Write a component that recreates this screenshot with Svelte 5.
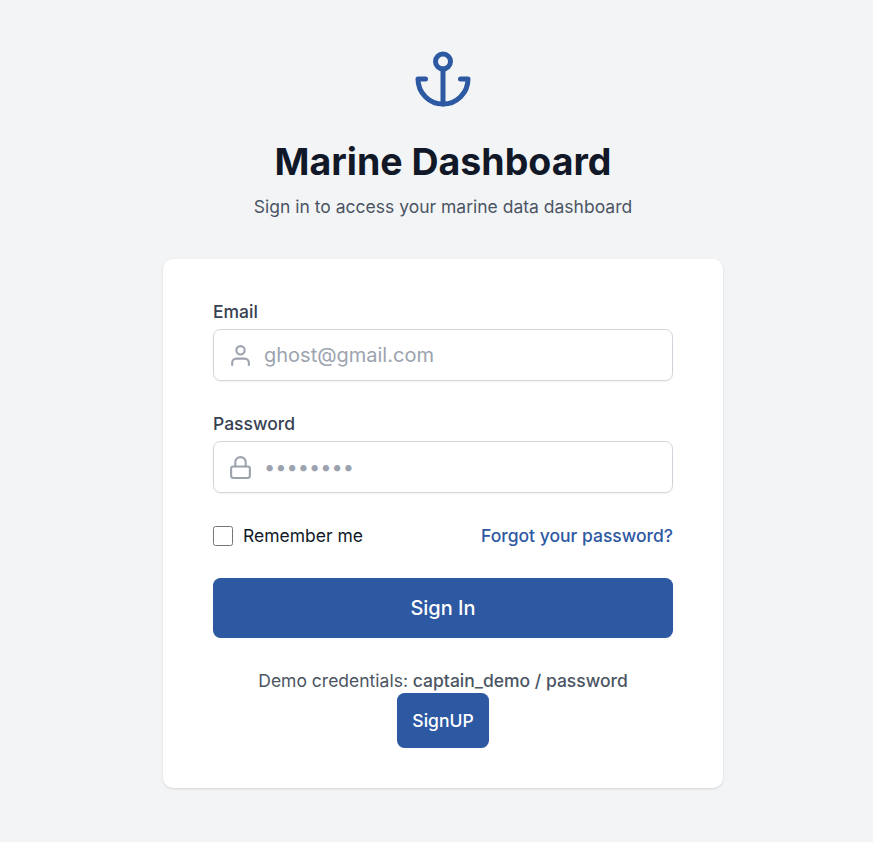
<script>
  let email = $state('');
  let password = $state('');
</script>

<main>
  <header>
    <svg class="anchor" viewBox="0 0 24 24" fill="none" stroke="currentColor" stroke-width="2" stroke-linecap="round" stroke-linejoin="round">
      <path d="M12 22V8" /><path d="M5 12H2a10 10 0 0 0 20 0h-3" /><circle cx="12" cy="5" r="3" />
    </svg>
    <h1>Marine Dashboard</h1>
    <p>Sign in to access your marine data dashboard</p>
  </header>
  <form class="card" onsubmit={(e) => e.preventDefault()}>
    <label class="title" for="email">Email</label>
    <div class="field">
      <svg viewBox="0 0 24 24" fill="none" stroke="currentColor" stroke-width="2" stroke-linecap="round" stroke-linejoin="round"><path d="M20 21v-2a4 4 0 0 0-4-4H8a4 4 0 0 0-4 4v2" /><circle cx="12" cy="7" r="4" /></svg>
      <input id="email" type="email" placeholder="ghost@gmail.com" bind:value={email} />
    </div>
    <label class="title second" for="password">Password</label>
    <div class="field">
      <svg viewBox="0 0 24 24" fill="none" stroke="currentColor" stroke-width="2" stroke-linecap="round" stroke-linejoin="round"><rect x="3" y="11" width="18" height="11" rx="2" /><path d="M7 11V7a5 5 0 0 1 10 0v4" /></svg>
      <input id="password" type="password" placeholder="••••••••" bind:value={password} />
    </div>
    <div class="options">
      <label class="remember"><input type="checkbox" />Remember me</label>
      <a href="#forgot">Forgot your password?</a>
    </div>
    <button class="signin">Sign In</button>
    <div class="demo">Demo credentials: <b>captain_demo / password</b></div>
    <button class="signup" type="button">SignUP</button>
  </form>
</main>

<style>
  :global(body) { margin: 0; background: #f3f4f6; }
  * { box-sizing: border-box; }
  main { height: 842px; padding: 49px 0 0 13px; display: flex; flex-direction: column; align-items: center; font-family: Inter, sans-serif; color: #111827; background: #f3f4f6; overflow: hidden; }
  header { height: 210px; display: flex; flex-direction: column; align-items: center; }
  .anchor { width: 60px; height: 60px; color: #2d58a2; }
  h1 { margin: 28px 0 0; font-size: 37.5px; line-height: 50px; font-weight: 700; color: #111827; white-space: nowrap; }
  header p { margin: 7px 0 0; font-size: 17.5px; line-height: 25px; color: #4b5563; white-space: nowrap; }
  .card { width: 560px; height: 529px; padding: 40px 50px; border-radius: 10px; background: #fff; box-shadow: 0 1px 3px rgb(0 0 0 / .1), 0 1px 2px -1px rgb(0 0 0 / .1); display: flex; flex-direction: column; }
  .title { display: block; font-size: 17.5px; line-height: 25px; font-weight: 500; color: #374151; }
  .second { margin-top: 30px; }
  .field { margin-top: 5px; height: 52px; flex: none; border: 1px solid #d1d5db; border-radius: 7.5px; display: flex; align-items: center; padding-left: 14px; box-shadow: 0 1px 2px rgb(0 0 0 / .05); }
  .field svg { width: 25px; height: 25px; color: #9ca3af; }
  .field input { border: 0; outline: 0; background: transparent; padding: 0 0 0 11px; flex: 1; min-width: 0; font: 400 20px/30px Inter, sans-serif; }
  .field input::placeholder { color: #9ca3af; opacity: 1; }
  .options { margin-top: 30px; height: 25px; display: flex; justify-content: space-between; align-items: center; font-size: 17.5px; line-height: 25px; }
  .remember { display: flex; align-items: center; }
  .remember input { width: 20px; height: 20px; margin: 0 10px 0 0; }
  a { color: #2d58a2; font-weight: 500; text-decoration: none; }
  button { font-family: Inter, sans-serif; border: 0; background: #2d58a2; color: #fff; font-weight: 500; padding: 0; }
  .signin { margin-top: 30px; height: 60px; border-radius: 7.5px; font-size: 20px; }
  .demo { margin-top: 30px; text-align: center; font-size: 17.5px; line-height: 25px; color: #4b5563; }
  b { font-weight: 500; }
  .signup { align-self: center; width: 92px; height: 55px; border-radius: 7.5px; font-size: 17.5px; }
</style>
